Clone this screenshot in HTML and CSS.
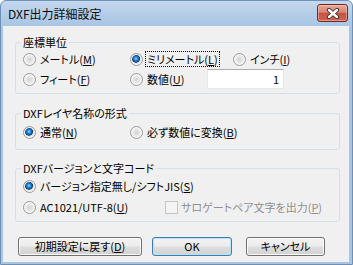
FILE: index.html
```html
<!DOCTYPE html>
<html>
<head>
    <link rel="stylesheet" href="styles.css">
</head>
<body>
    <div class="window">
        <div class="titlebar">
            <span class="title">DXF出力詳細設定</span>
            <span class="close">
                <svg width="14" height="11" viewBox="0 0 14 11">
                    <path d="M3 2 L11 9 M11 2 L3 9" stroke="#3a3030" stroke-width="4.2" stroke-linecap="round"/>
                    <path d="M3 2 L11 9 M11 2 L3 9" stroke="#fff" stroke-width="2.4" stroke-linecap="round"/>
                </svg>
            </span>
        </div>
        <div class="client">
            <fieldset class="group g1">
                <legend>座標単位</legend>
                <div class="row">
                    <label class="opt c1"><span class="radio"></span>メートル(<u>M</u>)</label>
                    <label class="opt c2"><span class="radio on"></span><span class="focus">ミリメートル(<u>L</u>)</span></label>
                    <label class="opt"><span class="radio"></span>インチ(<u>I</u>)</label>
                </div>
                <div class="row">
                    <label class="opt c1"><span class="radio"></span>フィート(<u>F</u>)</label>
                    <label class="opt c2s"><span class="radio"></span>数値(<u>U</u>)</label>
                    <div class="field">1</div>
                </div>
            </fieldset>

            <fieldset class="group g2">
                <legend>DXFレイヤ名称の形式</legend>
                <div class="row">
                    <label class="opt c1"><span class="radio on"></span>通常(<u>N</u>)</label>
                    <label class="opt"><span class="radio"></span>必ず数値に変換(<u>B</u>)</label>
                </div>
            </fieldset>

            <fieldset class="group g3">
                <legend>DXFバージョンと文字コード</legend>
                <div class="row">
                    <label class="opt"><span class="radio on"></span>バージョン指定無し/シフトJIS(<u>S</u>)</label>
                </div>
                <div class="row r2">
                    <label class="opt c3"><span class="radio"></span>AC1021/UTF-8(<u>U</u>)</label>
                    <label class="opt disabled"><span class="check"></span>サロゲートペア文字を出力(<u>P</u>)</label>
                </div>
            </fieldset>

            <div class="buttons">
                <button class="btn b1">初期設定に戻す(<u>D</u>)</button>
                <button class="btn b2 default">OK</button>
                <button class="btn b3">キャンセル</button>
            </div>
        </div>
    </div>
</body>
</html>
```

FILE: styles.css
```css
* {
    box-sizing: border-box;
}
body {
    margin: 0;
    font-family: "Noto Sans CJK JP", "Noto Sans", sans-serif;
    font-size: 11px;
    font-feature-settings: "palt";
    color: #000;
}
.window {
    width: 353px;
    height: 265px;
    display: flex;
    flex-direction: column;
    padding: 0 3px 2px 2px;
    border: 1px solid #6f8fb6;
    border-radius: 6px 6px 0 0;
    background: linear-gradient(#c4d8ee 0, #b3cce8 14px, #a9c5e4 26px, #a9c5e4 100%);
}
.titlebar {
    height: 25px;
    display: flex;
    align-items: flex-start;
    justify-content: space-between;
}
.title {
    margin: 6px 0 0 5px;
    font-size: 12px;
    line-height: 14px;
    color: #0b0b0b;
}
.close {
    margin: 3px 1px 0 0;
    width: 31px;
    height: 18px;
    border: 1px solid #6b2a22;
    border-radius: 3px;
    display: flex;
    align-items: center;
    justify-content: center;
    background: linear-gradient(#e8a99a 0, #d98372 45%, #c65340 52%, #cd624e 100%);
    box-shadow: inset 0 0 0 1px rgba(255, 220, 210, 0.45);
}
.client {
    flex: 1;
    background: #f0f0f0;
    display: flex;
    flex-direction: column;
}
.group {
    margin: 0 9px 0 12px;
    padding: 0 6px 4px 7px;
    border: 1px solid #d5dfe5;
    border-radius: 3px;
    min-width: 0;
}
.group legend {
    padding: 0 2px;
    margin-left: -2px;
    line-height: 14px;
    font-size: 11px;
}
.g1 {
    margin-top: 9px;
}
.g2 {
    margin-top: 12px;
    padding-top: 2px;
    padding-bottom: 7px;
}
.g3 {
    margin-top: 11px;
    padding-top: 1px;
    padding-bottom: 4px;
}
.row {
    height: 20px;
    display: flex;
    align-items: center;
    line-height: 14px;
}
.r2 {
    margin-top: 1px;
}
.opt {
    display: flex;
    align-items: center;
    white-space: nowrap;
}
.c1 {
    width: 107px;
}
.c2 {
    width: 103px;
}
.c2s {
    width: 77px;
}
.c3 {
    width: 142px;
}
.radio {
    flex: none;
    width: 13px;
    height: 13px;
    margin-right: 4px;
    border-radius: 50%;
    border: 1px solid #9a9a9a;
    background: radial-gradient(circle at 50% 50%, #d4d4d4 0, #e6e6e6 3px, #fbfbfb 6px);
    box-shadow: inset 0 0 0 1px #f6f6f6;
}
.radio.on {
    background: radial-gradient(circle at 45% 42%, #9be2ff 0, #2a8fdc 1.6px, #0d57a4 3.2px, #1b3f70 3.8px, #dadada 4.3px, #f8f8f8 6px);
}
.focus {
    outline: 1px dotted #000;
    outline-offset: 0;
    padding: 0 1px;
    margin-left: -1px;
}
.field {
    width: 77px;
    height: 20px;
    background: #fff;
    border: 1px solid #e2e8ee;
    border-top-color: #abadb3;
    text-align: right;
    padding-right: 4px;
    line-height: 18px;
}
.check {
    flex: none;
    width: 13px;
    height: 13px;
    margin-right: 3px;
    border: 1px solid #c5c5c5;
    background: #f4f4f4;
}
.disabled {
    color: #8f8f8f;
}
.buttons {
    margin: 15px 0 0 15px;
    display: flex;
}
.btn {
    height: 19px;
    padding: 0;
    font-family: inherit;
    font-size: 11px;
    font-feature-settings: "palt";
    line-height: 15px;
    color: #000;
    border: 1px solid #707070;
    border-radius: 3px;
    background: linear-gradient(#f3f3f3 0, #ececec 48%, #dedede 52%, #d2d2d2 100%);
    box-shadow: inset 0 0 0 1px #fbfbfb;
}
.b1 {
    width: 124px;
}
.b2 {
    width: 80px;
    margin-left: 10px;
}
.b3 {
    width: 79px;
    margin-left: 14px;
}
.btn.default {
    border-color: #3c7fb1;
    box-shadow: inset 0 0 0 1px #b8e2f8;
}
```
